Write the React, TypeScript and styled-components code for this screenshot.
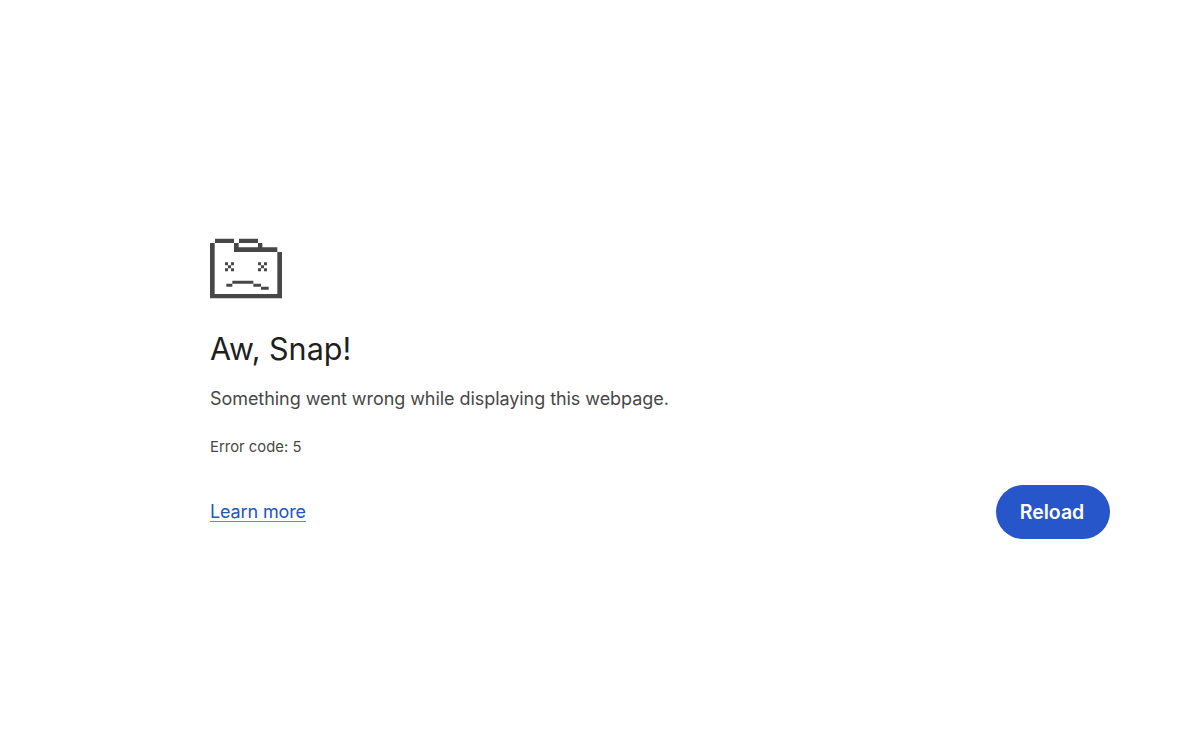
import styled, { createGlobalStyle } from 'styled-components';

const GlobalStyle = createGlobalStyle`
  body {
    margin: 0;
    background: #fff;
    color: #474747;
    font-family: Inter, "Liberation Sans", sans-serif;
  }
`;

const Page = styled.main`
  box-sizing: border-box;
  width: 900px;
  margin: 0 auto 0 210px;
  padding-top: 238px;
`;

const FolderIcon = styled.svg`
  display: block;
  width: 72px;
  height: 61px;
`;

const Title = styled.h1`
  margin: 30px 0 0;
  color: #1f1f1f;
  font-size: 30.5px;
  font-weight: 400;
  line-height: 40px;
`;

const Message = styled.p`
  margin: 16px 0 0;
  font-size: 18px;
  line-height: 28px;
  letter-spacing: -0.06px;
`;

const ErrorCode = styled.div`
  margin-top: 24px;
  font-size: 14.8px;
  line-height: 20px;
  letter-spacing: 0.04px;
`;

const Actions = styled.div`
  display: flex;
  align-items: center;
  justify-content: space-between;
  margin-top: 27.6px;
`;

const LearnMore = styled.a`
  color: #2354c4;
  font-size: 18px;
  line-height: 28px;
  letter-spacing: -0.13px;
  text-decoration: underline;
  text-decoration-thickness: 1px;
  text-decoration-color: #6585cd;
  text-underline-offset: 3px;
`;

const ReloadButton = styled.button`
  width: 114px;
  height: 54px;
  padding: 0 2px 0 0;
  border: 0;
  border-radius: 27px;
  background: #2656c9;
  color: #fff;
  font: 600 19.5px/54px Inter, "Liberation Sans", sans-serif;
`;

export default function App() {
  return (
    <>
      <GlobalStyle />
      <Page>
        <FolderIcon viewBox="18 18 216 183" aria-hidden="true">
          <path
            fill="#474747"
            d="M33 20H90V33H33ZM105 20H162V33H105ZM90 33H104V46H90ZM162 33H175V46H162ZM90 46H220V60H90ZM220 60H234V186H220ZM18 33H32V186H18ZM18 186H234V199H18Z
            M63 91h9v9h-9zM81 91h9v9h-9zM72 100h9v9h-9zM63 109h9v9h-9zM81 109h9v9h-9z
            M162 91h9v9h-9zM180 91h9v9h-9zM171 100h9v9h-9zM162 109h9v9h-9zM180 109h9v9h-9z
            M67 155H85V164H67ZM85 146H148V155H85ZM148 155H171V164H148ZM171 164H194V173H171Z"
          />
        </FolderIcon>
        <Title>Aw, Snap!</Title>
        <Message>Something went wrong while displaying this webpage.</Message>
        <ErrorCode>Error code: 5</ErrorCode>
        <Actions>
          <LearnMore href="#">Learn more</LearnMore>
          <ReloadButton type="button">Reload</ReloadButton>
        </Actions>
      </Page>
    </>
  );
}
